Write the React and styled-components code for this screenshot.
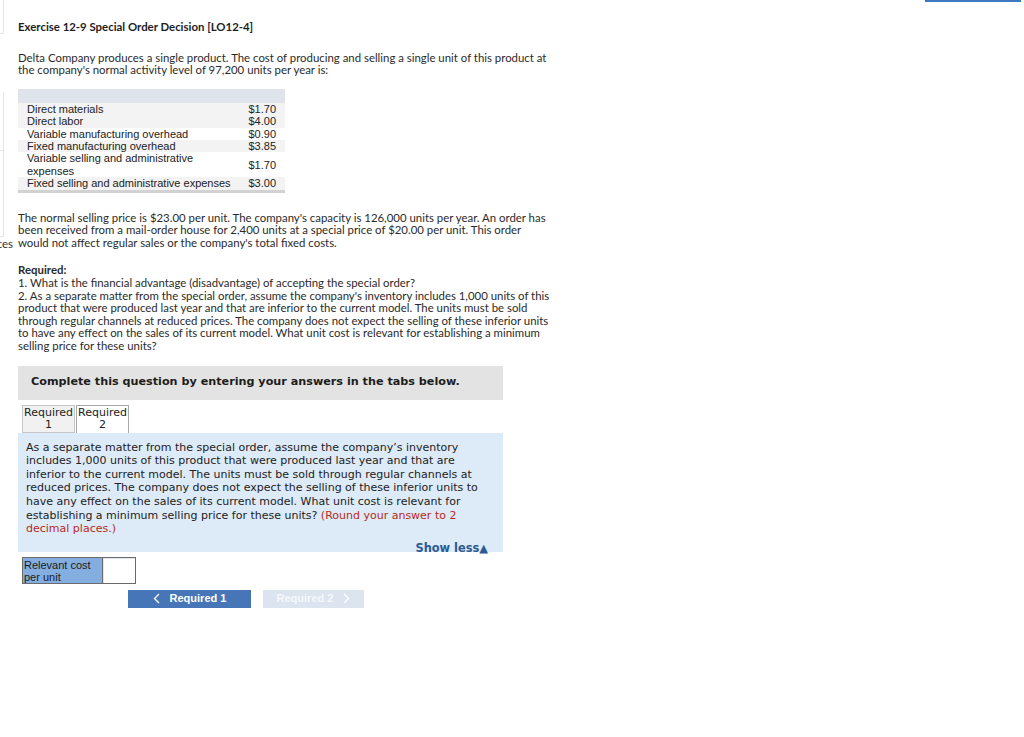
import React from 'react'
import styled, { createGlobalStyle } from 'styled-components'

const Global = createGlobalStyle`
  html, body { margin: 0; padding: 0; background: #fff; }
  body { width: 1024px; height: 737px; overflow: hidden; }
`

const Page = styled.div`
  position: relative;
  width: 1024px;
  height: 737px;
  display: flex;
`
const TopBar = styled.div`
  position: absolute;
  top: 0;
  left: 925px;
  width: 96px;
  height: 2px;
  background: #3f78c0;
`
const Side = styled.div`
  width: 18px;
  flex: none;
  display: flex;
  flex-direction: column;
`
const SideBox = styled.div`
  height: ${p => p.h}px;
  width: 3px;
  flex: none;
  border-right: 1px solid ${p => (p.line ? '#e6e6e6' : 'transparent')};
  border-bottom: 1px solid ${p => (p.line ? '#e6e6e6' : 'transparent')};
`
const Clip = styled.div`
  font-family: 'Lato', sans-serif;
  font-size: 11.4px;
  line-height: 13px;
  color: #333;
  width: 13px;
  overflow: hidden;
  white-space: nowrap;
  display: flex;
  justify-content: flex-end;
`
const Main = styled.div`
  width: 545px;
  padding-top: 21px;
  font-family: 'Lato', 'Liberation Sans', sans-serif;
  font-size: 11.4px;
  line-height: 12.6px;
  color: #2b2b2b;
`
const Title = styled.div`
  font-weight: 700;
  color: #1e1e1e;
  margin-bottom: 18px;
`
const Para = styled.p`
  margin: 0;
  width: ${p => p.w || 535}px;
`
const Table = styled.table`
  margin: 12px 0 0 0;
  border-collapse: collapse;
  table-layout: fixed;
  width: 267px;
  font-family: 'Liberation Sans', Arial, sans-serif;
  font-size: 11px;
  line-height: 12.4px;
  color: #222;
  border-bottom: 3px solid #d2d2d2;
`
const Head = styled.tr`
  background: #dfe3ea;
  height: 14px;
`
const Row = styled.tr`
  background: ${p => (p.shade ? '#f3f3f3' : '#fff')};
`
const Label = styled.td`
  padding: 0 0 0 9px;
  white-space: nowrap;
`
const Value = styled.td`
  padding: 0 9px 0 0;
  text-align: right;
  vertical-align: middle;
`
const Section = styled.div`
  margin-top: ${p => p.mt}px;
`
const Bold = styled.div`
  font-weight: 700;
`
const Banner = styled.div`
  margin-top: 13px;
  width: 472px;
  height: 34px;
  padding-left: 13px;
  display: flex;
  align-items: center;
  background: #e3e3e3;
  font-family: 'DejaVu Sans', Verdana, sans-serif;
  font-weight: 700;
  font-size: 11.2px;
  color: #1d1d1d;
`
const Tabs = styled.div`
  display: flex;
  margin: 5px 0 0 4px;
  gap: 1px;
`
const Tab = styled.div`
  width: 53px;
  height: 28px;
  box-sizing: border-box;
  border: 1px solid ${p => (p.active ? '#a9a9a9' : '#c6c6c6')};
  border-bottom: ${p => (p.active ? 'none' : '1px solid #c6c6c6')};
  background: ${p => (p.active ? '#fff' : '#f1f1f1')};
  font-family: 'DejaVu Sans', Verdana, sans-serif;
  font-size: 11px;
  line-height: 12.5px;
  color: #222;
  text-align: center;
  padding-top: 1px;
`
const Panel = styled.div`
  width: 485px;
  height: 119px;
  box-sizing: border-box;
  background: #ddeaf7;
  padding: 8px 8px 0 8px;
  font-family: 'DejaVu Sans', Verdana, sans-serif;
  font-size: 11px;
  line-height: 13.6px;
  color: #222;
  display: flex;
  flex-direction: column;
`
const Red = styled.span`
  color: #b72a22;
`
const ShowLess = styled.div`
  align-self: flex-end;
  margin-top: 6px;
  margin-right: 7px;
  font-weight: 700;
  color: #2c5b94;
  font-size: 11.4px;
  line-height: 13px;
`
const InputRow = styled.div`
  display: flex;
  margin: 5px 0 0 4px;
`
const InputLabel = styled.div`
  width: 80px;
  height: 27px;
  box-sizing: border-box;
  border: 1px solid #6a6a6a;
  border-right: none;
  background: #84ade0;
  font-family: 'Liberation Sans', Arial, sans-serif;
  font-size: 11px;
  line-height: 12px;
  color: #1b1b1b;
  padding: 1px 0 0 1px;
`
const InputBox = styled.div`
  width: 34px;
  height: 27px;
  box-sizing: border-box;
  border: 1px solid #6a6a6a;
  background: #fff;
  box-shadow: inset 1px 1px 0 #dfe6f0;
`
const NavRow = styled.div`
  display: flex;
  gap: 12px;
  margin: 6px 0 0 110px;
`
const NavButton = styled.div`
  height: 18px;
  width: ${p => p.w}px;
  box-sizing: border-box;
  display: flex;
  align-items: center;
  justify-content: center;
  gap: 10px;
  background: ${p => (p.disabled ? '#dbe4ef' : '#4676b7')};
  color: ${p => (p.disabled ? '#f6f8fb' : '#fff')};
  font-family: 'Liberation Sans', Arial, sans-serif;
  font-weight: 700;
  font-size: 11px;
`

const Chevron = ({ dir, color }) => (
  <svg width="7" height="11" viewBox="0 0 7 11">
    <path
      d={dir === 'left' ? 'M6 1 L1.5 5.5 L6 10' : 'M1 1 L5.5 5.5 L1 10'}
      fill="none"
      stroke={color}
      strokeWidth="1.4"
    />
  </svg>
)

const costs = [
  ['Direct materials', '$1.70'],
  ['Direct labor', '$4.00'],
  ['Variable manufacturing overhead', '$0.90'],
  ['Fixed manufacturing overhead', '$3.85'],
  [['Variable selling and administrative', 'expenses'], '$1.70'],
  ['Fixed selling and administrative expenses', '$3.00'],
]

export default function App() {
  return (
    <Page>
      <Global />
      <TopBar />
      <Side>
        <SideBox h={33} line />
        <SideBox h={57} />
        <SideBox h={58} line />
        <SideBox h={85} line />
        <Clip>ces</Clip>
      </Side>
      <Main>
        <Title>Exercise 12-9 Special Order Decision [LO12-4]</Title>
        <Para>
          Delta Company produces a single product. The cost of producing and selling a single unit of this product at
          the company's normal activity level of 97,200 units per year is:
        </Para>
        <Table>
          <colgroup>
            <col style={{ width: 229 }} />
            <col style={{ width: 38 }} />
          </colgroup>
          <tbody>
            <Head>
              <td colSpan={2} />
            </Head>
            {costs.map(([l, v], i) => (
              <Row key={i} shade={i % 2 === 1 || i === 0}>
                <Label>
                  {Array.isArray(l) ? (
                    <>
                      {l[0]}
                      <br />
                      {l[1]}
                    </>
                  ) : (
                    l
                  )}
                </Label>
                <Value>{v}</Value>
              </Row>
            ))}
          </tbody>
        </Table>
        <Section mt={19}>
          <Para>
            The normal selling price is $23.00 per unit. The company's capacity is 126,000 units per year. An order has
            been received from a mail-order house for 2,400 units at a special price of $20.00 per unit. This order
            would not affect regular sales or the company's total fixed costs.
          </Para>
        </Section>
        <Section mt={15}>
          <Bold>Required:</Bold>
          <Para>
            1. What is the financial advantage (disadvantage) of accepting the special order?
            <br />
            2. As a separate matter from the special order, assume the company's inventory includes 1,000 units of this
            product that were produced last year and that are inferior to the current model. The units must be sold
            through regular channels at reduced prices. The company does not expect the selling of these inferior units
            to have any effect on the sales of its current model. What unit cost is relevant for establishing a minimum
            selling price for these units?
          </Para>
        </Section>
        <Banner>Complete this question by entering your answers in the tabs below.</Banner>
        <Tabs>
          <Tab>
            Required
            <br />1
          </Tab>
          <Tab active>
            Required
            <br />2
          </Tab>
        </Tabs>
        <Panel>
          <div>
            As a separate matter from the special order, assume the company’s inventory includes 1,000 units of this
            product that were produced last year and that are inferior to the current model. The units must be sold
            through regular channels at reduced prices. The company does not expect the selling of these inferior units
            to have any effect on the sales of its current model. What unit cost is relevant for establishing a minimum
            selling price for these units? <Red>(Round your answer to 2 decimal places.)</Red>
          </div>
          <ShowLess>Show less▲</ShowLess>
        </Panel>
        <InputRow>
          <InputLabel>
            Relevant cost
            <br />
            per unit
          </InputLabel>
          <InputBox />
        </InputRow>
        <NavRow>
          <NavButton w={123}>
            <Chevron dir="left" color="#fff" />
            Required 1
          </NavButton>
          <NavButton w={101} disabled>
            Required 2
            <Chevron dir="right" color="#fff" />
          </NavButton>
        </NavRow>
      </Main>
    </Page>
  )
}
